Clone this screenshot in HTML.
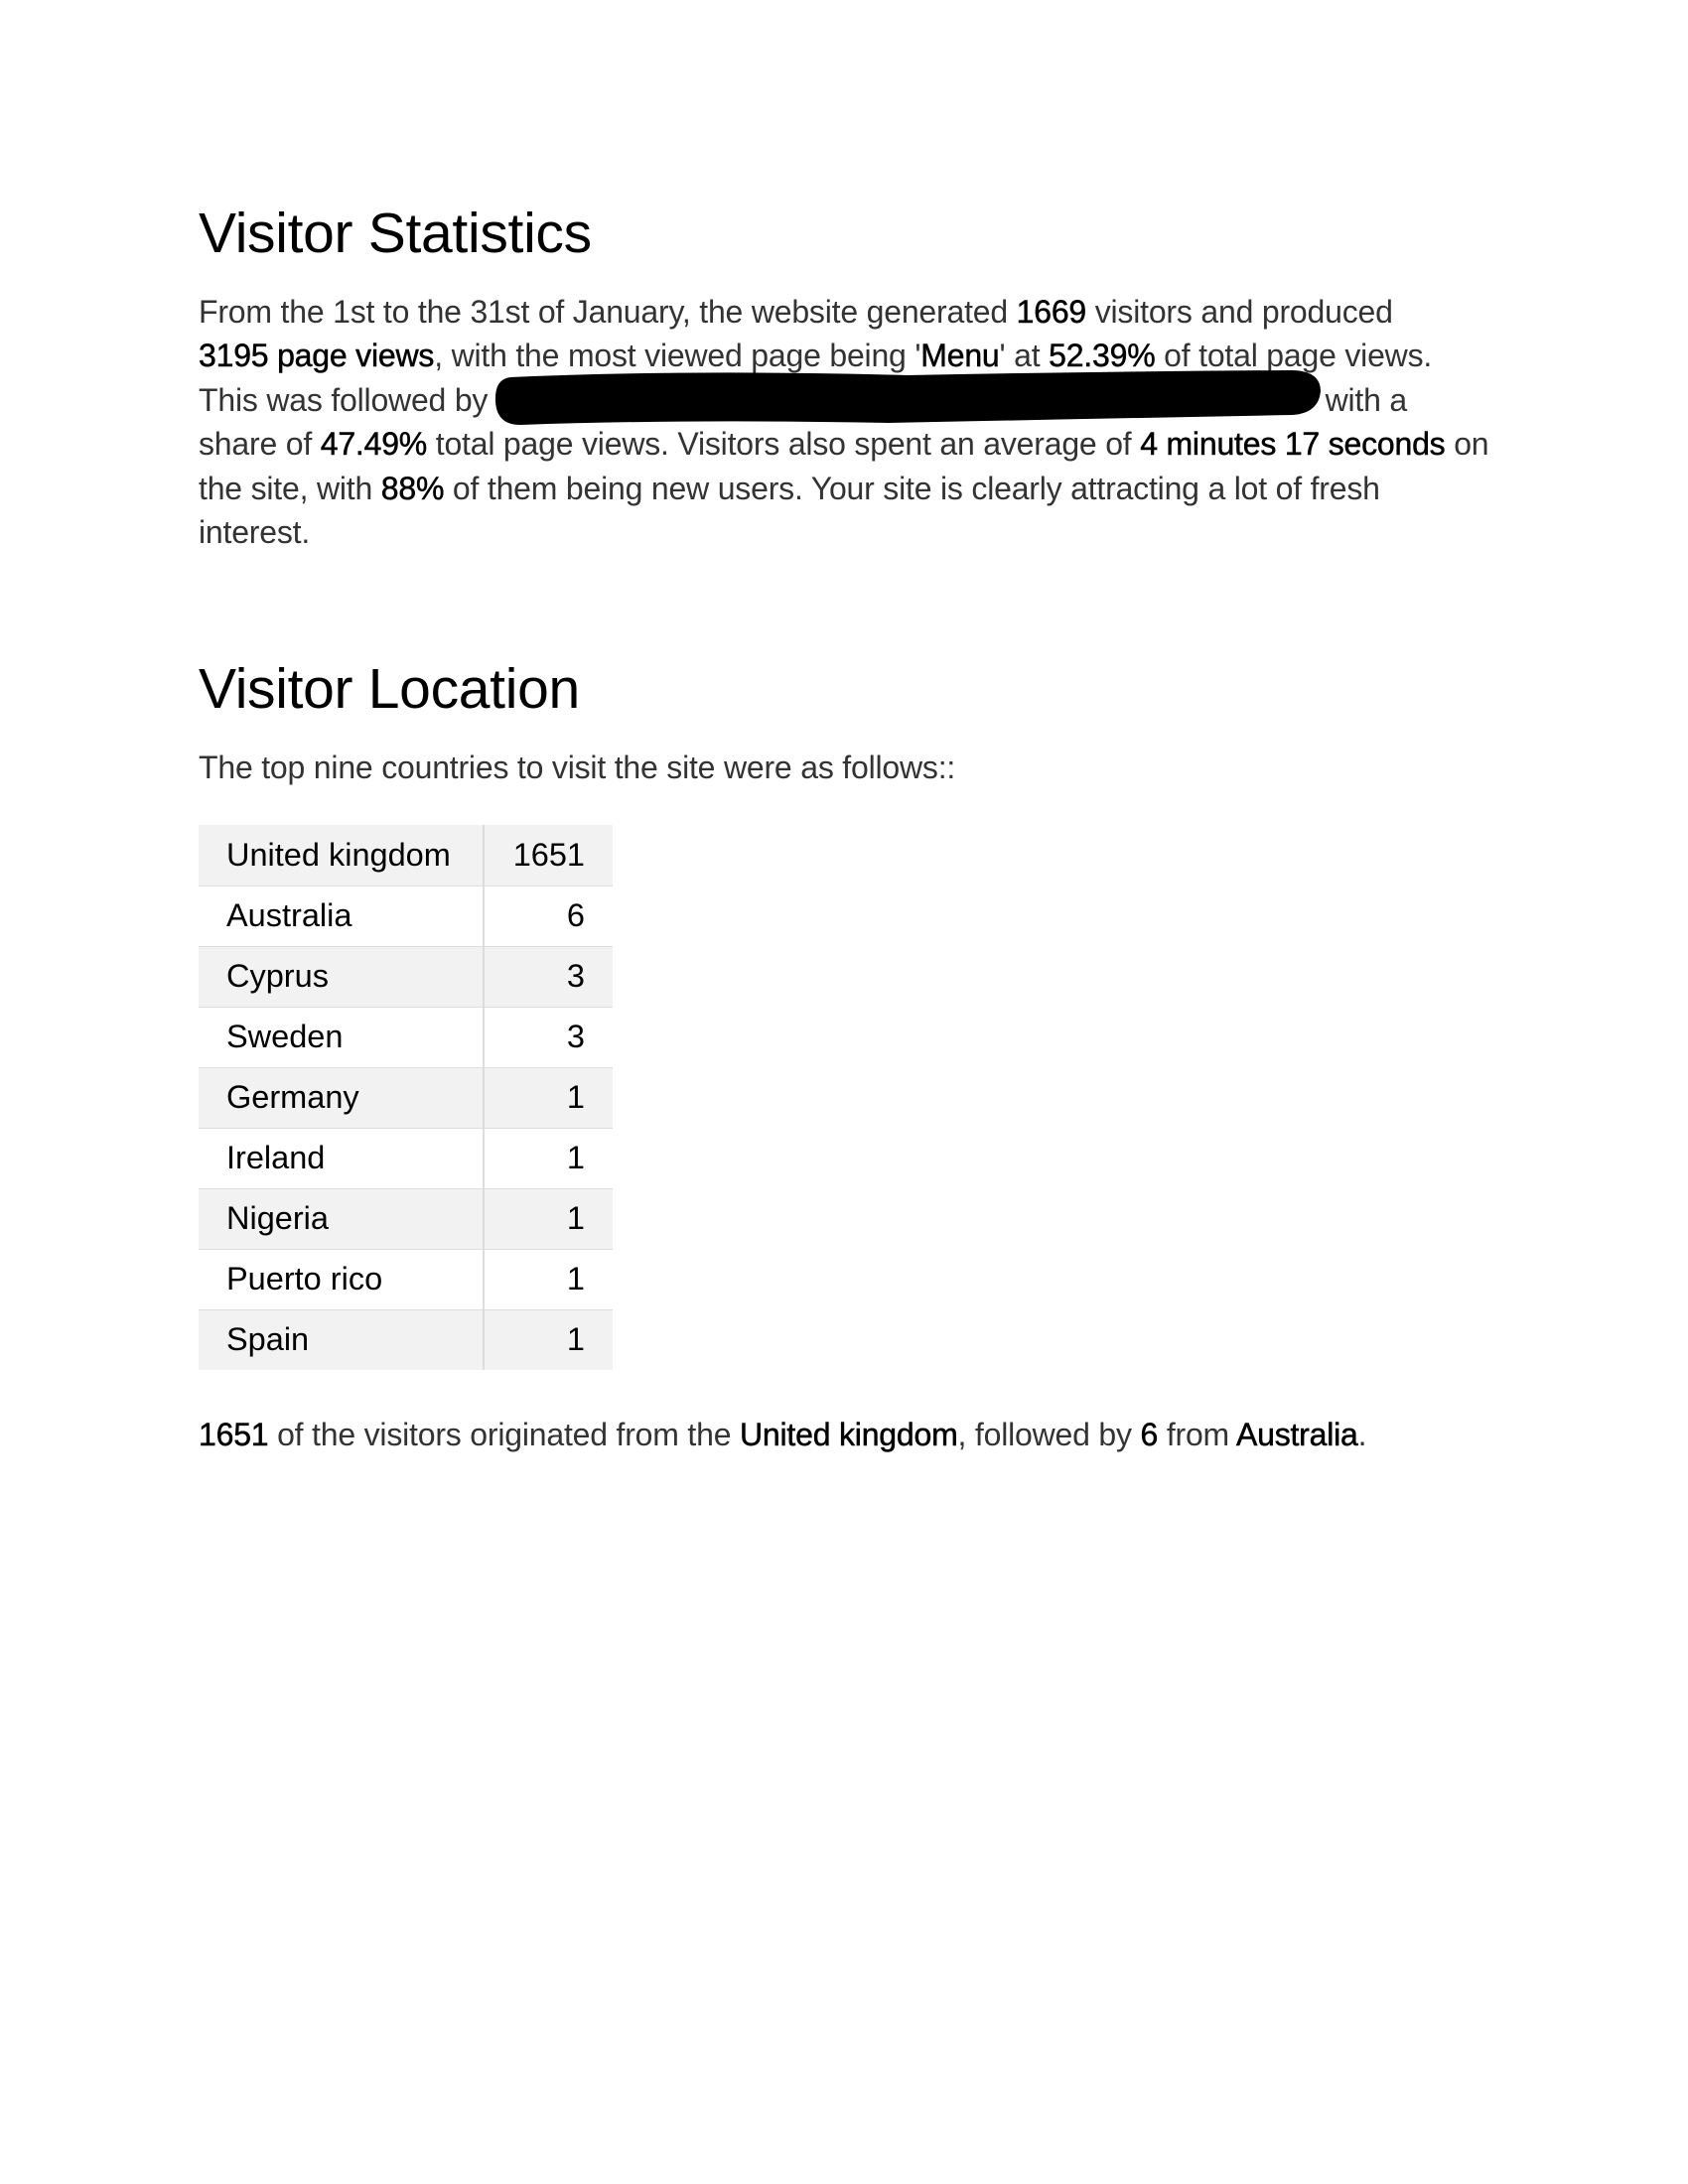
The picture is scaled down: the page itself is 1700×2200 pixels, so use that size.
<!DOCTYPE html>
<html><head><meta charset="utf-8"><style>
html,body{margin:0;padding:0;background:#fff;}
body{width:1700px;height:2200px;position:relative;overflow:hidden;font-family:"Liberation Sans",sans-serif;color:#222;}
.h{position:absolute;left:200px;font-size:57px;color:#000;white-space:nowrap;line-height:1;letter-spacing:-0.3px}
.l{position:absolute;left:200px;font-size:32px;white-space:nowrap;line-height:1;color:#333;letter-spacing:-0.2px}
.l b{font-weight:normal;color:#000;-webkit-text-stroke:0.5px #000}
table{position:absolute;left:200px;top:831px;border-collapse:collapse;font-family:"Liberation Sans",sans-serif;font-size:32.5px;color:#000}
td{height:61px;padding:0;border-bottom:1px solid #ddd;box-sizing:border-box}
tr:last-child td{border-bottom:none}
td.c{width:287px;padding-left:28px}
td.n{width:130px;text-align:right;padding-right:28px;border-left:2px solid #ddd}
tr:nth-child(odd) td{background:#f2f2f2}
</style></head><body>
<div class="h" style="top:207px">Visitor Statistics</div>
<div class="l" style="top:298px">From the 1st to the 31st of January, the website generated <b>1669</b> visitors and produced</div>
<div class="l" style="top:342px"><b>3195 page views</b>, with the most viewed page being '<b>Menu</b>' at <b>52.39%</b> of total page views.</div>
<div class="l" style="top:387px">This was followed by '</div>
<div class="l" style="top:387px;left:1320px">' with a</div>
<div class="l" style="top:431px">share of <b>47.49%</b> total page views. Visitors also spent an average of <b>4 minutes 17 seconds</b> on</div>
<div class="l" style="top:476px">the site, with <b>88%</b> of them being new users. Your site is clearly attracting a lot of fresh</div>
<div class="l" style="top:520px">interest.</div>
<svg style="position:absolute;left:494px;top:370px" width="840" height="60"><path d="M20 10 Q200 2 420 8 Q620 4 808 3 Q836 4 836 24 Q834 46 808 48 Q600 52 400 56 Q200 52 30 58 Q6 58 5 34 Q4 12 20 10Z" fill="#000"/></svg>
<div class="h" style="top:666px">Visitor Location</div>
<div class="l" style="top:757px">The top nine countries to visit the site were as follows::</div>
<table>
<tr><td class="c">United kingdom</td><td class="n">1651</td></tr>
<tr><td class="c">Australia</td><td class="n">6</td></tr>
<tr><td class="c">Cyprus</td><td class="n">3</td></tr>
<tr><td class="c">Sweden</td><td class="n">3</td></tr>
<tr><td class="c">Germany</td><td class="n">1</td></tr>
<tr><td class="c">Ireland</td><td class="n">1</td></tr>
<tr><td class="c">Nigeria</td><td class="n">1</td></tr>
<tr><td class="c">Puerto rico</td><td class="n">1</td></tr>
<tr><td class="c">Spain</td><td class="n">1</td></tr>
</table>
<div class="l" style="top:1429px"><b>1651</b> of the visitors originated from the <b>United kingdom</b>, followed by <b>6</b> from <b>Australia</b>.</div>
</body></html>
